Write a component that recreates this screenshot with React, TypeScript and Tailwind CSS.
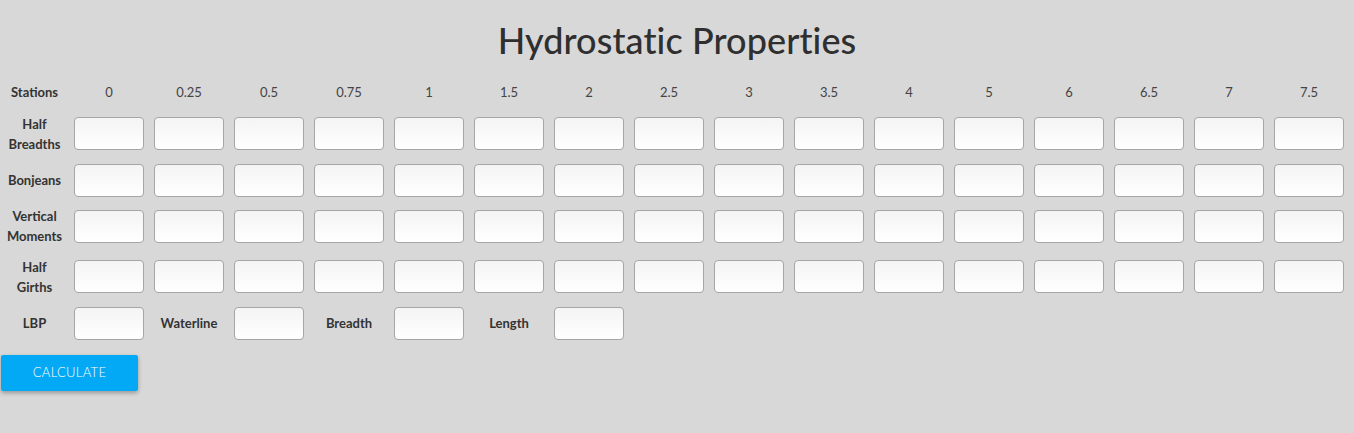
import React from "react";

const stations = ["0", "0.25", "0.5", "0.75", "1", "1.5", "2", "2.5", "3", "3.5", "4", "5", "6", "6.5", "7", "7.5"];

const rows = [
  { label: ["Half", "Breadths"], h: "h-[47px]" },
  { label: ["Bonjeans"], h: "h-[46px]" },
  { label: ["Vertical", "Moments"], h: "h-[46px]" },
  { label: ["Half", "Girths"], h: "h-[55px]" },
];

const extras = ["Waterline", "Breadth", "Length"];

const Field: React.FC = () => (
  <input
    type="text"
    className="w-[70px] h-[33px] rounded-[4px] border border-[#a6a6a6] bg-gradient-to-b from-[#f4f4f4] to-white outline-none"
  />
);

const App: React.FC = () => {
  return (
    <div className="min-h-[433px] bg-[#d8d8d8] text-[#333] font-['Lato',sans-serif]">
      <h1 className="pt-[18px] text-center text-[36px] leading-[44px] font-medium tracking-[0.1px] text-[#2f2f2f]">
        Hydrostatic Properties
      </h1>

      <div className="mt-[20px] flex flex-col">
        {/* Header */}
        <div className="flex h-[22px] items-center">
          <div className="w-[74px] pr-[5px] text-center text-[13px] font-bold">Stations</div>
          {stations.map((s) => (
            <div key={s} className="w-[80px] pr-[10px] text-center text-[13px] text-[#444]">
              {s}
            </div>
          ))}
        </div>

        <div className="h-[6px]" />

        {rows.map((row) => (
          <div key={row.label.join(" ")} className={`flex items-center ${row.h}`}>
            <div className="w-[74px] pr-[5px] text-center text-[13px] font-bold leading-[20px]">
              {row.label.map((l) => (
                <div key={l}>{l}</div>
              ))}
            </div>
            {stations.map((s) => (
              <div key={s} className="w-[80px] flex">
                <Field />
              </div>
            ))}
          </div>
        ))}

        {/* Particulars */}
        <div className="flex h-[39px] items-center">
          <div className="w-[74px] pr-[5px] text-center text-[13px] font-bold">LBP</div>
          <div className="w-[80px] flex">
            <Field />
          </div>
          {extras.map((e) => (
            <React.Fragment key={e}>
              <div className="w-[80px] pr-[10px] text-center text-[13px] font-bold">{e}</div>
              <div className="w-[80px] flex">
                <Field />
              </div>
            </React.Fragment>
          ))}
        </div>
      </div>

      <button className="mt-[12px] ml-[1px] w-[137px] h-[36px] rounded-[2px] bg-[#03a9f4] text-white text-[13px] font-light tracking-[0.3px] shadow-[0_2px_4px_rgba(0,0,0,0.3)]">
        CALCULATE
      </button>
    </div>
  );
};

export default App;
